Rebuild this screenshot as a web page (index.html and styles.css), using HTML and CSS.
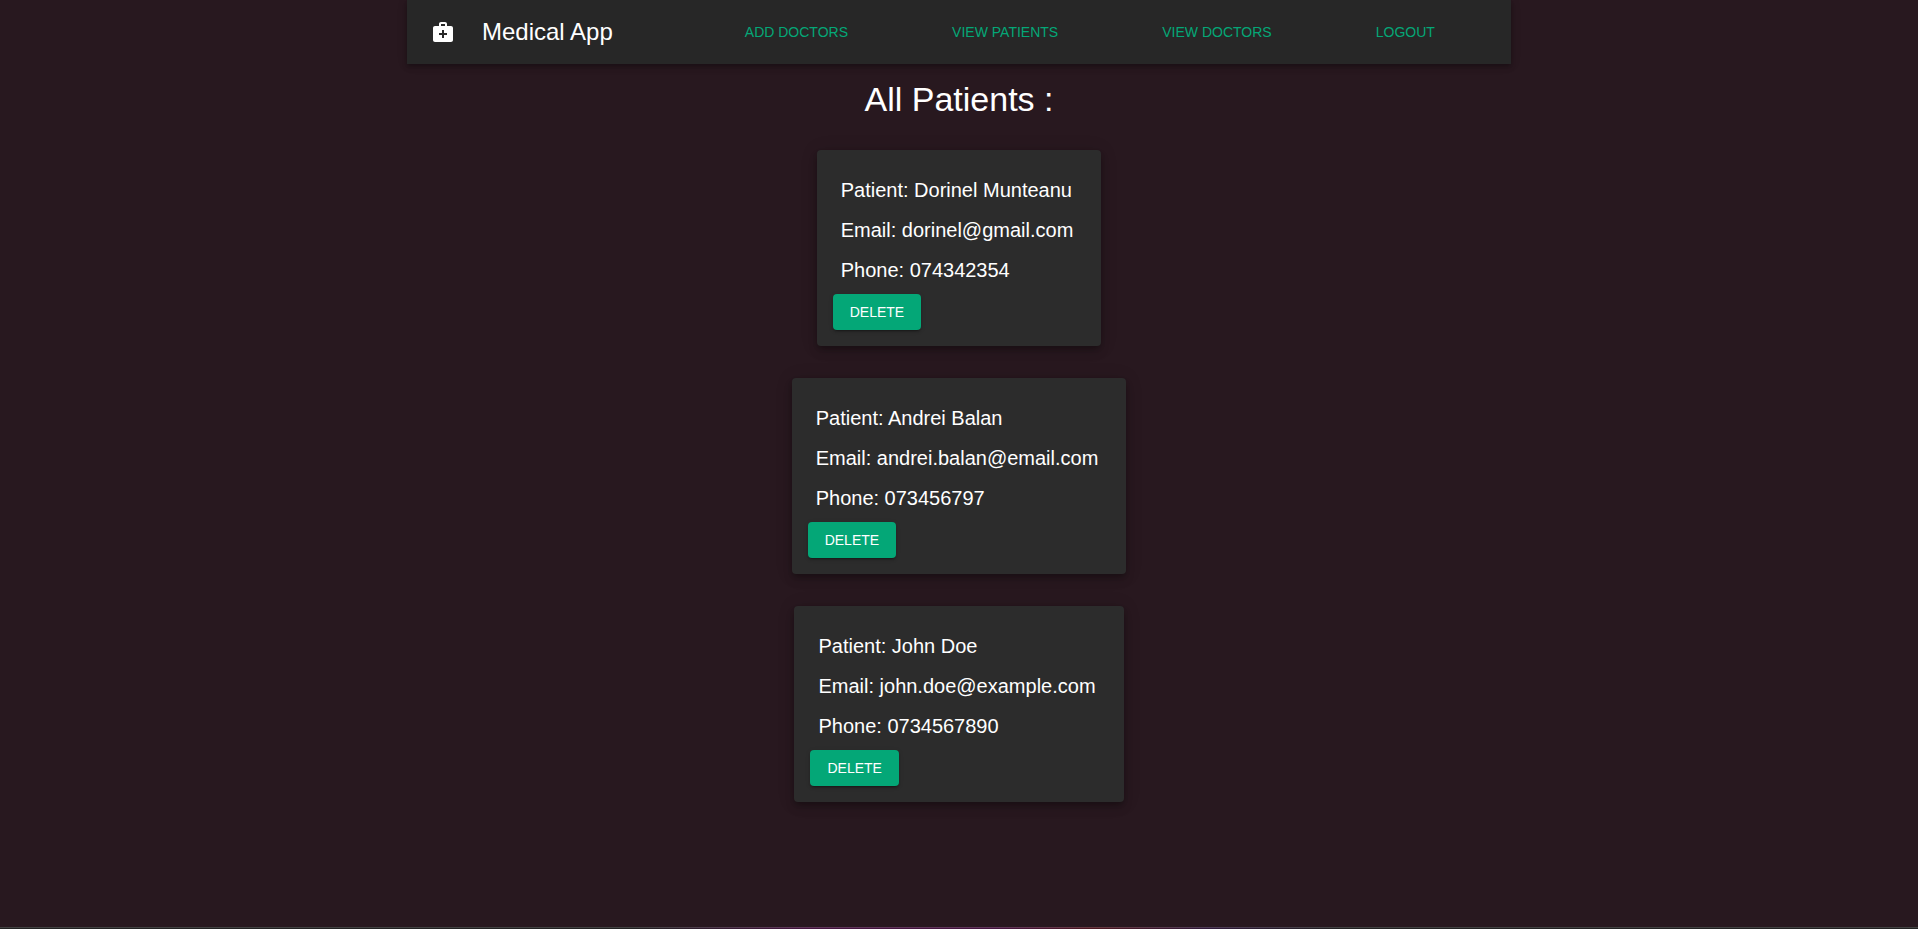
FILE: index.html
```
<!DOCTYPE html>
<html lang="en">
<head>
<meta charset="utf-8">
<title>Medical App</title>
<link rel="stylesheet" href="styles.css">
</head>
<body>
<header class="app-bar">
  <svg class="app-icon" viewBox="0 0 24 24" aria-hidden="true"><path d="M20 6h-4V4c0-1.100-.9-2-2-2h-4c-1.100 0-2 .9-2 2v2H4c-1.100 0-2 .9-2 2v12c0 1.100.9 2 2 2h16c1.100 0 2-.9 2-2V8c0-1.100-.9-2-2-2zM10 4h4v2h-4V4zm6 11h-3v3h-2v-3H8v-2h3v-3h2v3h3v2z"/></svg>
  <span class="app-title">Medical App</span>
  <nav class="app-nav">
    <a class="nav-link" href="#add-doctors">ADD DOCTORS</a>
    <a class="nav-link" href="#patients">VIEW PATIENTS</a>
    <a class="nav-link" href="#doctors">VIEW DOCTORS</a>
    <a class="nav-link" href="#logout">LOGOUT</a>
  </nav>
</header>
<main class="content" id="patients">
  <h1 class="page-title">All Patients :</h1>
  <article class="card">
    <p class="card-line">Patient: Dorinel Munteanu</p>
    <p class="card-line">Email: dorinel@gmail.com</p>
    <p class="card-line">Phone: 074342354</p>
    <button class="delete" type="button">DELETE</button>
  </article>
  <article class="card">
    <p class="card-line">Patient: Andrei Balan</p>
    <p class="card-line">Email: andrei.balan@email.com</p>
    <p class="card-line">Phone: 073456797</p>
    <button class="delete" type="button">DELETE</button>
  </article>
  <article class="card">
    <p class="card-line">Patient: John Doe</p>
    <p class="card-line">Email: john.doe@example.com</p>
    <p class="card-line">Phone: 0734567890</p>
    <button class="delete" type="button">DELETE</button>
  </article>
</main>
<footer class="bottom-edge"></footer>
</body>
</html>
```
FILE: styles.css
```
* { box-sizing: border-box; }
body {
  margin: 0;
  min-height: 100vh;
  display: flex;
  flex-direction: column;
  background: #28181f;
  color: #fff;
  font-family: "Liberation Sans", Arial, sans-serif;
}
.app-bar {
  display: flex;
  align-items: center;
  width: 100%;
  max-width: 1104px;
  min-height: 64px;
  margin: 0 auto;
  padding: 0 24px;
  background: #272727;
  box-shadow: 0 2px 4px -1px rgba(0,0,0,.2), 0 4px 5px rgba(0,0,0,.14), 0 1px 10px rgba(0,0,0,.12);
}
.app-icon { width: 24px; height: 24px; fill: #fff; }
.app-title { margin-left: 27px; font-size: 24px; line-height: 32px; }
.app-nav { flex: 1; display: flex; justify-content: space-around; margin-left: 80px; }
.nav-link { color: #04a777; font-size: 14px; line-height: 24px; text-decoration: none; }
.content { flex: 1; display: flex; flex-direction: column; align-items: center; gap: 32px; padding-top: 14px; }
.page-title { margin: 0 0 -2px; font-size: 34px; font-weight: 400; line-height: 42px; }
.card {
  padding: 16px;
  background: #2c2c2c;
  border-radius: 4px;
  box-shadow: 0 3px 5px -1px rgba(0,0,0,.2), 0 6px 10px rgba(0,0,0,.14), 0 1px 18px rgba(0,0,0,.12);
}
.card-line { margin: 8px 12px 8px 8px; font-size: 20px; line-height: 32px; }
.delete {
  display: block;
  height: 36px;
  padding: 0 17px;
  border: 0;
  border-radius: 4px;
  background: #04a777;
  color: #fff;
  font: 14px/24px "Liberation Sans", Arial, sans-serif;
  box-shadow: 0 3px 1px -2px rgba(0,0,0,.2), 0 2px 2px rgba(0,0,0,.14), 0 1px 5px rgba(0,0,0,.12);
}
.bottom-edge {
  height: 2px;
  border-top: 1px solid rgba(255,255,255,.15);
  background: linear-gradient(90deg, #222 0%, #222 33%, #45153f 42%, #45153f 52%, #4d1720 57%, #301a3a 63%, #222 70%);
}
```
